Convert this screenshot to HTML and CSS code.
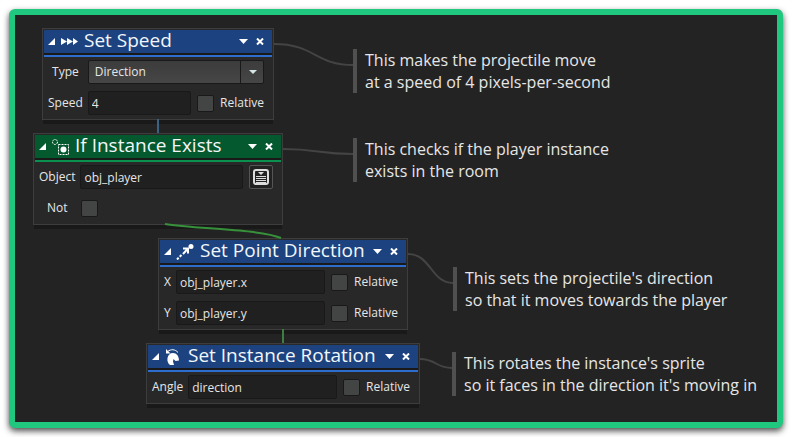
FILE: index.html
```html
<!DOCTYPE html>
<html lang="en">
<head>
<meta charset="utf-8">
<meta name="viewport" content="width=device-width, initial-scale=1">
<title>Projectile actions</title>
<link rel="stylesheet" href="styles.css">
</head>
<body>
<main class="canvas">
  <section class="node node-speed">
    <header class="node-head">
      <button class="icon-btn" aria-label="Collapse"><svg width="7" height="7"><path d="M7 0V7H0Z"/></svg></button>
      <svg class="node-icon" width="18" height="16"><path d="M1 4L7 7.500L1 11ZM7 4L13 7.500L7 11ZM13 4L18 7.500L13 11Z"/></svg>
      <h2 class="node-title">Set Speed</h2>
      <button class="icon-btn push" aria-label="Menu"><svg width="9" height="5"><path d="M0 0H9L4.500 5Z"/></svg></button>
      <button class="icon-btn" aria-label="Close"><svg width="8" height="7"><path class="cross" d="M1 0.500L7 6.500M7 0.500L1 6.500"/></svg></button>
    </header>
    <div class="node-body">
      <label class="name" for="type">Type</label>
      <div class="row">
        <div class="drop"><select id="type"><option>Direction</option></select><span class="drop-arrow"><svg width="8" height="4"><path d="M0 0H8L4 4Z"/></svg></span></div>
      </div>
      <label class="name" for="speed">Speed</label>
      <div class="row">
        <input class="field" id="speed" type="text" value="4">
        <label class="check"><input type="checkbox">Relative</label>
      </div>
    </div>
  </section>

  <section class="node node-exists">
    <header class="node-head">
      <button class="icon-btn" aria-label="Collapse"><svg width="7" height="7"><path d="M7 0V7H0Z"/></svg></button>
      <svg class="node-icon" width="18" height="16"><g class="line thin"><circle cx="4" cy="3" r="2.500" stroke-dasharray="2 1"/><rect x="7.500" y="5.500" width="10" height="10" stroke-dasharray="2 1"/></g><circle cx="12.500" cy="10.500" r="3"/></svg>
      <h2 class="node-title">If Instance Exists</h2>
      <button class="icon-btn push" aria-label="Menu"><svg width="9" height="5"><path d="M0 0H9L4.500 5Z"/></svg></button>
      <button class="icon-btn" aria-label="Close"><svg width="8" height="7"><path class="cross" d="M1 0.500L7 6.500M7 0.500L1 6.500"/></svg></button>
    </header>
    <div class="node-body">
      <label class="name" for="object">Object</label>
      <div class="row">
        <input class="field" id="object" type="text" value="obj_player">
        <button class="picker" aria-label="Choose object"><svg width="16" height="16"><rect class="frame" x="1" y="1" width="14" height="14" rx="2"/><path d="M5 3H11L8 6ZM3 7H13V8H3ZM3 9H13V10H3ZM3 11H13V12H3ZM3 13H13V14H3Z"/></svg></button>
      </div>
      <label class="name" for="not">Not</label>
      <div class="row">
        <span class="check solo"><input id="not" type="checkbox"></span>
      </div>
    </div>
  </section>

  <section class="node node-point">
    <header class="node-head">
      <button class="icon-btn" aria-label="Collapse"><svg width="7" height="7"><path d="M7 0V7H0Z"/></svg></button>
      <svg class="node-icon" width="18" height="16"><circle cx="15" cy="2.500" r="2.500"/><path class="line" d="M7 4.500H12V9.500M12 4.500L7 10"/><path class="line" d="M5.500 11L1 15.500" stroke-dasharray="2.500 1.500"/></svg>
      <h2 class="node-title">Set Point Direction</h2>
      <button class="icon-btn push" aria-label="Menu"><svg width="9" height="5"><path d="M0 0H9L4.500 5Z"/></svg></button>
      <button class="icon-btn" aria-label="Close"><svg width="8" height="7"><path class="cross" d="M1 0.500L7 6.500M7 0.500L1 6.500"/></svg></button>
    </header>
    <div class="node-body">
      <label class="name" for="px">X</label>
      <div class="row">
        <input class="field" id="px" type="text" value="obj_player.x">
        <label class="check"><input type="checkbox">Relative</label>
      </div>
      <label class="name" for="py">Y</label>
      <div class="row">
        <input class="field" id="py" type="text" value="obj_player.y">
        <label class="check"><input type="checkbox">Relative</label>
      </div>
    </div>
  </section>

  <section class="node node-rotation">
    <header class="node-head">
      <button class="icon-btn" aria-label="Collapse"><svg width="7" height="7"><path d="M7 0V7H0Z"/></svg></button>
      <svg class="node-icon" width="18" height="16"><path d="M9 4C12.500 4 15 7 15 11.500L11.500 12L9.500 10L9 12.500L10 16H6C4 14.500 3 12 3.500 9C4 6 6 4 9 4Z"/><path class="line thin" d="M3.500 2.500C7 0 11 0 14 3.500"/><path d="M2 0V4.500H6.500Z"/></svg>
      <h2 class="node-title">Set Instance Rotation</h2>
      <button class="icon-btn push" aria-label="Menu"><svg width="9" height="5"><path d="M0 0H9L4.500 5Z"/></svg></button>
      <button class="icon-btn" aria-label="Close"><svg width="8" height="7"><path class="cross" d="M1 0.500L7 6.500M7 0.500L1 6.500"/></svg></button>
    </header>
    <div class="node-body">
      <label class="name" for="angle">Angle</label>
      <div class="row">
        <input class="field" id="angle" type="text" value="direction">
        <label class="check"><input type="checkbox">Relative</label>
      </div>
    </div>
  </section>

  <p class="note note-speed">This makes the projectile move<br>at a speed of 4 pixels-per-second</p>
  <p class="note note-exists">This checks if the player instance<br>exists in the room</p>
  <p class="note note-point">This sets the projectile's direction<br>so that it moves towards the player</p>
  <p class="note note-rotation">This rotates the instance's sprite<br>so it faces in the direction it's moving in</p>

  <svg class="wires" aria-hidden="true">
    <g class="wire-note">
      <path d="M259 29C300 29 300 50 338 50"/>
      <path d="M268 134C303 134 303 139 338 139"/>
      <path d="M393 239C416 239 416 268 438 268"/>
      <path d="M405 344C421 344 421 353 437 353"/>
    </g>
    <path class="wire-blue" d="M143 104V118"/>
    <path class="wire-curve" d="M150 209C180 214 245 214 266 223"/>
    <path class="wire-green" d="M268 314V328"/>
  </svg>
</main>
</body>
</html>
```
FILE: styles.css
```css
* {
  box-sizing: border-box;
}

body {
  margin: 0;
  min-height: 100vh;
  padding: 9px;
  display: flex;
  background: #fff;
  color: #e6e6e6;
  font: 12px/16px "Open Sans", "Noto Sans", sans-serif;
}

.canvas {
  position: relative;
  flex: 1;
  background: #232323;
  border: 6px solid #1fc77f;
  border-radius: 6px;
  box-shadow: 0 3px 6px rgba(0, 0, 0, 0.7);
}

.wires {
  position: absolute;
  inset: 0;
  width: 100%;
  height: 100%;
  fill: none;
  stroke-width: 2;
  pointer-events: none;
}

.wire-note { stroke: #444; }
.wire-blue { stroke: #3b6282; }
.wire-green { stroke: #3c8040; }
.wire-curve { stroke: #36913a; }

/* Action blocks, placed freely on the workspace */
.node {
  position: absolute;
  padding: 1px;
  background: #282828;
  border: 1px solid #3d3d3d;
  box-shadow: 0 5px 0 -1px #191919;
}

.node-speed { left: 27px; top: 13px; width: 232px; }
.node-exists { left: 18px; top: 118px; width: 250px; --head: #05592f; --line: #0a9150; }
.node-point { left: 143px; top: 223px; width: 250px; }
.node-rotation { left: 131px; top: 328px; width: 274px; }

.node-head {
  display: flex;
  align-items: center;
  gap: 5px;
  height: 27px;
  padding: 0 8px 4px 4px;
  background: linear-gradient(var(--head, #1c437f) 23px, #191919 23px, #191919 25px, var(--line, #2e6dcc) 25px);
}

.node-head svg {
  display: block;
  fill: #fff;
}

.node-head .line {
  fill: none;
  stroke: #fff;
  stroke-width: 2;
}

.node-head .thin {
  stroke-width: 1;
}

.cross {
  stroke: #fff;
  stroke-width: 2;
}

.node-title {
  margin: 0 0 4px 1px;
  font-size: 19px;
  line-height: 20px;
  font-weight: 400;
  color: #f2f6fa;
  white-space: nowrap;
}

.icon-btn {
  padding: 0;
  border: 0;
  background: none;
}

.push {
  margin-left: auto;
  margin-right: 3px;
}

.node-body {
  display: grid;
  grid-template-columns: auto minmax(0, 1fr);
  align-items: center;
  gap: 7px 5px;
  padding: 3px 8px 3px 4px;
}

.name {
  text-align: center;
}

.row {
  display: flex;
  align-items: center;
  gap: 6px;
  height: 24px;
}

.field {
  flex: 1;
  min-width: 0;
  height: 24px;
  padding: 0 3px;
  background: #202020;
  border: 1px solid #191919;
  border-radius: 2px;
  color: inherit;
  font: inherit;
}

.check {
  display: flex;
  align-items: center;
  gap: 6px;
}

.check input {
  appearance: none;
  width: 17px;
  height: 17px;
  margin: 0;
  background: #434544;
  border: 1px solid #191919;
  border-radius: 2px;
}

.solo {
  padding-left: 1px;
}

.drop {
  display: flex;
  flex: 1;
  position: relative;
}

.drop select {
  appearance: none;
  flex: 1;
  min-width: 0;
  height: 24px;
  padding: 0 30px 0 6px;
  background: linear-gradient(#3c3c3c, #464646);
  border: 1px solid #191919;
  border-radius: 2px;
  color: inherit;
  font: inherit;
}

.drop-arrow {
  position: absolute;
  right: 0;
  top: 1px;
  bottom: 1px;
  width: 24px;
  display: grid;
  place-items: center;
  border-left: 1px solid #191919;
  pointer-events: none;
}

.drop-arrow svg {
  fill: #d5e6e6;
}

.picker {
  display: grid;
  place-items: center;
  width: 24px;
  height: 24px;
  padding: 0;
  background: #222;
  border: 1px solid #555;
  border-radius: 2px;
}

.picker svg {
  display: block;
  fill: #ddd;
}

.picker .frame {
  fill: none;
  stroke: #ddd;
  stroke-width: 2;
}

/* Notes beside the blocks */
.note {
  position: absolute;
  margin: 0;
  padding-left: 8px;
  border-left: 4px solid #505050;
  font-size: 16px;
  line-height: 22px;
  white-space: nowrap;
}

.note-speed { left: 338px; top: 34px; }
.note-exists { left: 338px; top: 123px; }
.note-point { left: 438px; top: 252px; }
.note-rotation { left: 437px; top: 337px; }
```
